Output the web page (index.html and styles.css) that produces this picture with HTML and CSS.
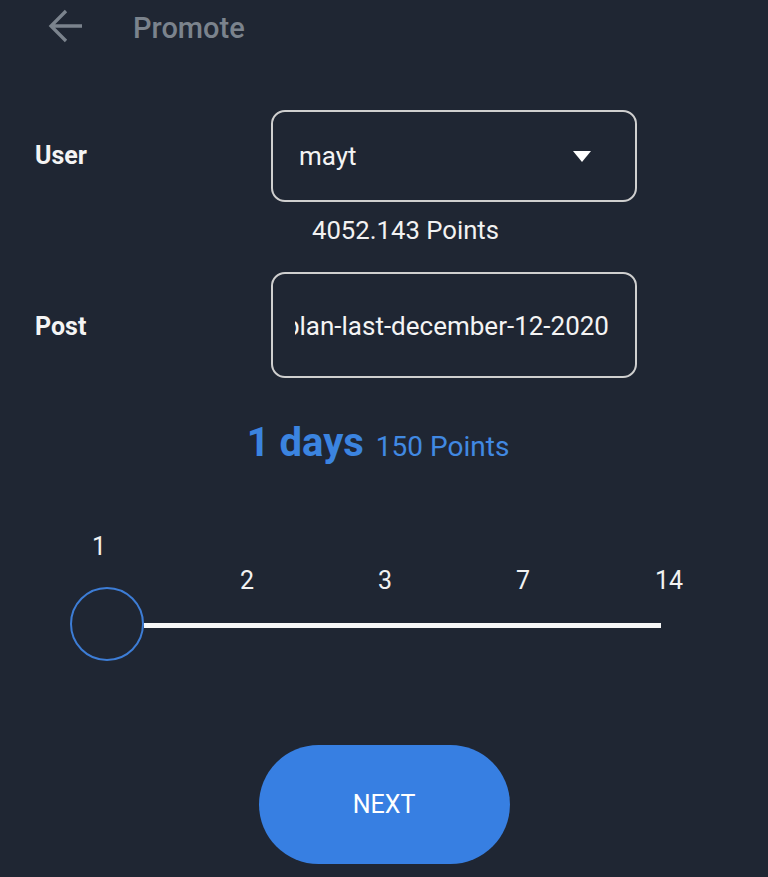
FILE: index.html
```html
<!DOCTYPE html>
<html lang="en">
<head>
<meta charset="utf-8">
<title>Promote</title>
<link rel="stylesheet" href="styles.css">
</head>
<body>
<div class="page">
  <header class="topbar">
    <svg class="back" width="38" height="36" viewBox="0 0 38 36" aria-hidden="true">
      <path d="M36 18H5M20 3L5 18L20 33" fill="none" stroke="#7b838d" stroke-width="3.3" stroke-linejoin="miter"/>
    </svg>
    <h1 class="title">Promote</h1>
  </header>

  <div class="form">
    <div class="label">User</div>
    <div class="box select">
      <span class="value">mayt</span>
      <span class="caret"></span>
    </div>
    <div class="hint">4052.143 Points</div>

    <div class="label post-label">Post</div>
    <div class="box post-box">
      <div class="clip"><span class="value">my-plan-last-december-12-2020</span></div>
    </div>
  </div>

  <div class="days">
    <span class="days-num">1 days</span>
    <span class="days-pts">150 Points</span>
  </div>

  <div class="slider">
    <div class="ticks">
      <span class="tick active">1</span>
      <span class="tick">2</span>
      <span class="tick">3</span>
      <span class="tick">7</span>
      <span class="tick">14</span>
    </div>
    <div class="rail">
      <span class="thumb"></span>
      <span class="track"></span>
    </div>
  </div>

  <div class="actions">
    <button class="next" type="button">NEXT</button>
  </div>
</div>
</body>
</html>
```

FILE: styles.css
```css
html, body {
  margin: 0;
  padding: 0;
  background: #1f2633;
}
body {
  font-family: Roboto, "Noto Sans", "Liberation Sans", sans-serif;
  color: #f2f2f2;
  width: 768px;
  height: 877px;
  overflow: hidden;
}
.page {
  display: flex;
  flex-direction: column;
}
.topbar {
  display: flex;
  align-items: center;
  height: 36px;
  padding: 8px 0 0 46px;
}
.back {
  display: block;
  flex: none;
}
.title {
  margin: 4px 0 0 49px;
  font-size: 29px;
  font-weight: 500;
  line-height: 36px;
  color: #7b838d;
}
.form {
  display: grid;
  grid-template-columns: 236px 366px;
  align-items: center;
  padding-left: 35px;
  margin-top: 66px;
}
.label {
  font-size: 25px;
  font-weight: 700;
  line-height: 30px;
  color: #f4f4f4;
}
.box {
  box-sizing: border-box;
  border: 2px solid #cfcfcf;
  border-radius: 14px;
  display: flex;
  align-items: center;
}
.select {
  height: 92px;
  padding: 0 44px 0 26px;
  justify-content: space-between;
}
.value {
  font-size: 26px;
  line-height: 30px;
  color: #f4f4f4;
  white-space: nowrap;
}
.caret {
  width: 0;
  height: 0;
  border-left: 9.5px solid transparent;
  border-right: 9.5px solid transparent;
  border-top: 11px solid #ffffff;
}
.hint {
  grid-column: 2;
  margin: 13px 0 0 41px;
  font-size: 25.7px;
  line-height: 30px;
  color: #f2f2f2;
}
.post-label {
  margin-top: 31px;
}
.post-box {
  margin-top: 27px;
  height: 106px;
  padding: 0 26px 0 22px;
}
.post-box .value {
  margin-top: 2px;
}
.clip {
  flex: 1;
  min-width: 0;
  overflow: hidden;
  display: flex;
  justify-content: flex-end;
}
.days {
  display: flex;
  justify-content: center;
  align-items: baseline;
  gap: 12px;
  margin-top: 42px;
  padding-right: 12px;
  line-height: 46px;
  color: #3b84e0;
}
.days-num {
  font-size: 40px;
  font-weight: 700;
}
.days-pts {
  font-size: 28px;
  font-weight: 400;
  color: #4189e2;
}
.slider {
  margin-top: 67px;
}
.ticks {
  display: grid;
  grid-template-columns: 148px 138px 138px 146px 60px;
  align-items: end;
  padding-left: 69px;
}
.tick {
  width: 60px;
  text-align: center;
  font-size: 25px;
  line-height: 20px;
  color: #f2f2f2;
}
.tick.active {
  margin-bottom: 34px;
}
.rail {
  display: flex;
  align-items: center;
  padding-left: 70px;
  margin-top: -4px;
}
.thumb {
  box-sizing: border-box;
  width: 74px;
  height: 74px;
  border: 2px solid #3d7dd6;
  border-radius: 50%;
  flex: none;
}
.track {
  width: 517px;
  height: 5px;
  margin-top: 3px;
  background: #f7f7f7;
  flex: none;
}
.actions {
  display: flex;
  justify-content: center;
  margin-top: 84px;
}
.next {
  width: 251px;
  height: 119px;
  border: none;
  border-radius: 60px;
  background: #377fe2;
  color: #ffffff;
  font-family: Roboto, "Noto Sans", "Liberation Sans", sans-serif;
  font-size: 25px;
  font-weight: 400;
  padding: 0;
}
```
